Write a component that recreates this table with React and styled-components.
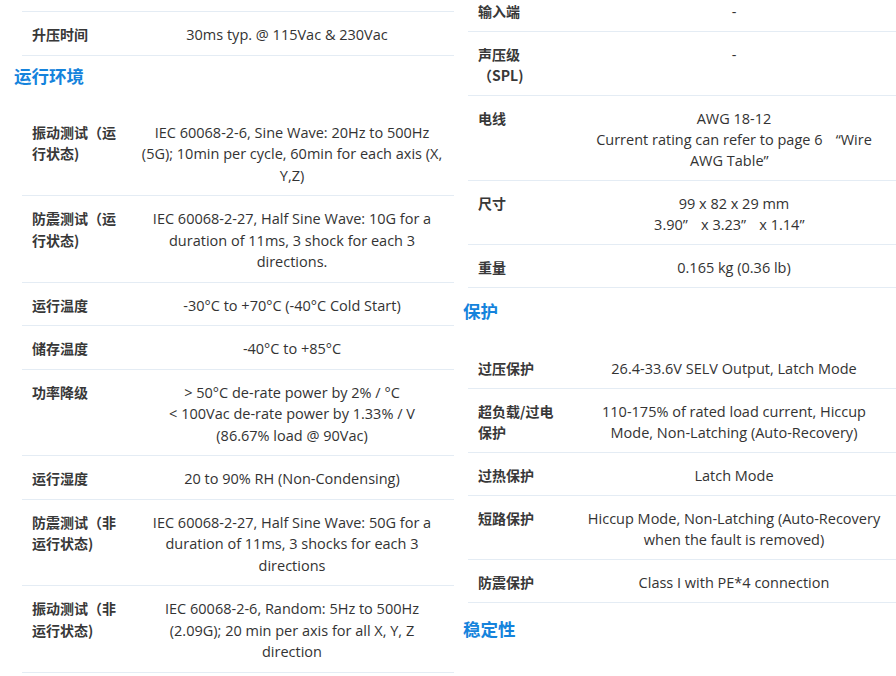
import React from "react";
import styled, { createGlobalStyle } from "styled-components";

const Global = createGlobalStyle`
  html, body { margin: 0; padding: 0; background: #fff; }
  body {
    font-family: "Open Sans", "Noto Sans CJK SC", sans-serif;
    color: #333;
    overflow: hidden;
  }
`;

const Page = styled.div`
  width: 896px;
  height: 676px;
  overflow: hidden;
  display: flex;
  align-items: flex-start;
  padding-left: 14px;
  gap: 8px;
  box-sizing: border-box;
`;

const Column = styled.div`
  width: ${(p) => p.$width}px;
  flex: none;
  display: flex;
  flex-direction: column;
  padding-top: ${(p) => p.$top || 0}px;
  margin-top: ${(p) => p.$shift || 0}px;
`;

const Heading = styled.h3`
  margin: ${(p) => p.$top}px 0 ${(p) => p.$bottom}px ${(p) => p.$indent || 0}px;
  font-family: "Noto Sans CJK SC", sans-serif;
  font-size: 17.5px;
  line-height: 24px;
  font-weight: 700;
  color: #1583dc;
`;

const Table = styled.div`
  margin-left: ${(p) => p.$indent}px;
  display: flex;
  flex-direction: column;
  border-top: ${(p) => (p.$topLine ? "1px solid #e4ecf4" : "none")};
  line-height: ${(p) => p.$lh || 21.5}px;
`;

const Row = styled.div`
  display: grid;
  grid-template-columns: ${(p) => p.$label}px 1fr;
  align-items: start;
  padding: 12px 0 9px;
  border-bottom: 1px solid #e4ecf4;
  font-size: 14.5px;
`;

const Label = styled.div`
  padding: 0 10px;
  font-family: "Noto Sans CJK SC", sans-serif;
  font-size: 14px;
  font-weight: 700;
  color: #383838;
  white-space: nowrap;
`;

const Value = styled.div`
  padding: 0 6px;
  text-align: center;
  color: #333;
  white-space: nowrap;
`;

const Line = styled.span`
  display: block;
`;

const Quote = styled.span`
  display: inline-block;
  width: 1em;
  text-align: ${(p) => (p.$open ? "right" : "left")};
`;

const q = (s) =>
  s.split(/([“”])/).map((part, i) =>
    part === "“" ? (
      <Quote key={i} $open>“</Quote>
    ) : part === "”" ? (
      <Quote key={i}>”</Quote>
    ) : (
      part
    )
  );

function Spec({ label, value, labelWidth }) {
  return (
    <Row $label={labelWidth}>
      <Label>
        {label.map((l, i) => (
          <Line key={i}>{l}</Line>
        ))}
      </Label>
      <Value>
        {value.map((v, i) => (
          <Line key={i}>{q(v)}</Line>
        ))}
      </Value>
    </Row>
  );
}

const env = [
  [["振动测试（运", "行状态)"], ["IEC 60068-2-6, Sine Wave: 20Hz to 500Hz", "(5G); 10min per cycle, 60min for each axis (X,", "Y,Z)"]],
  [["防震测试（运", "行状态)"], ["IEC 60068-2-27, Half Sine Wave: 10G for a", "duration of 11ms, 3 shock for each 3", "directions."]],
  [["运行温度"], ["-30°C to +70°C (-40°C Cold Start)"]],
  [["储存温度"], ["-40°C to +85°C"]],
  [["功率降级"], ["> 50°C de-rate power by 2% / °C", "< 100Vac de-rate power by 1.33% / V", "(86.67% load @ 90Vac)"]],
  [["运行湿度"], ["20 to 90% RH (Non-Condensing)"]],
  [["防震测试（非", "运行状态)"], ["IEC 60068-2-27, Half Sine Wave: 50G for a", "duration of 11ms, 3 shocks for each 3", "directions"]],
  [["振动测试（非", "运行状态)"], ["IEC 60068-2-6, Random: 5Hz to 500Hz", "(2.09G); 20 min per axis for all X, Y, Z", "direction"]],
];

const mech = [
  [["输入端"], ["-"]],
  [["声压级", "（SPL)"], ["-"]],
  [["电线"], ["AWG 18-12", "Current rating can refer to page 6 “Wire", "AWG Table”"]],
  [["尺寸"], ["99 x 82 x 29 mm", "3.90” x 3.23” x 1.14”"]],
  [["重量"], ["0.165 kg (0.36 lb)"]],
];

const protect = [
  [["过压保护"], ["26.4-33.6V SELV Output, Latch Mode"]],
  [["超负载/过电", "保护"], ["110-175% of rated load current, Hiccup", "Mode, Non-Latching (Auto-Recovery)"]],
  [["过热保护"], ["Latch Mode"]],
  [["短路保护"], ["Hiccup Mode, Non-Latching (Auto-Recovery", "when the fault is removed)"]],
  [["防震保护"], ["Class I with PE*4 connection"]],
];

export default function App() {
  return (
    <>
      <Global />
      <Page>
        <Column $width={440} $top={11}>
          <Table $indent={8} $topLine>
            <Spec labelWidth={98} label={["升压时间"]} value={["30ms typ. @ 115Vac & 230Vac"]} />
          </Table>
          <Heading $top={8} $bottom={22}>运行环境</Heading>
          <Table $indent={8}>
            {env.map(([l, v], i) => (
              <Spec key={i} labelWidth={108} label={l} value={v} />
            ))}
          </Table>
        </Column>
        <Column $width={434} $shift={-11}>
          <Table $indent={6} $lh={21}>
            {mech.map(([l, v], i) => (
              <Spec key={i} labelWidth={104} label={l} value={v} />
            ))}
          </Table>
          <Heading $top={11} $bottom={23} $indent={1}>保护</Heading>
          <Table $indent={6} $lh={21}>
            {protect.map(([l, v], i) => (
              <Spec key={i} labelWidth={104} label={l} value={v} />
            ))}
          </Table>
          <Heading $top={14} $bottom={20} $indent={1}>稳定性</Heading>
        </Column>
      </Page>
    </>
  );
}
